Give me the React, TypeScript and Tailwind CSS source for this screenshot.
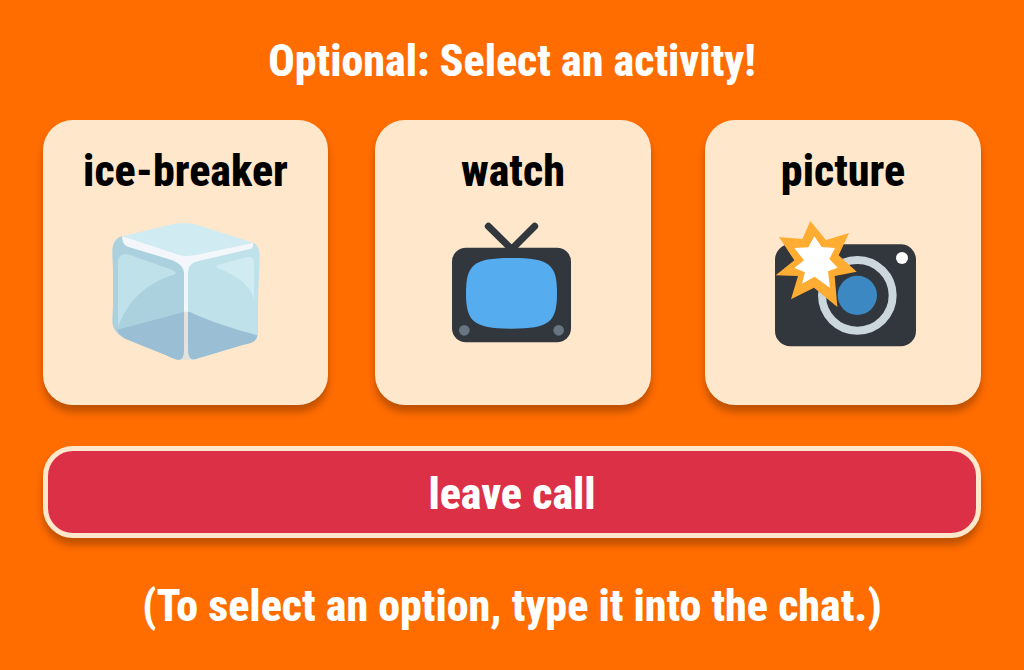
import type { ReactNode } from "react";

function IceIcon() {
  return (
    <svg viewBox="33 30 450 420" className="h-[140px] w-[150px]" aria-hidden="true">
      <path fill="#F3F7FB" d="M66 79L258 130L459 98L460 120L290 170L267 310L250 310L230 175L75 125Z" />
      <path fill="#E4E2DA" d="M249 305H267V420L277 449Q258 451 240 448L249 420Z" />
      <path fill="#D1EBF2" d="M66 79L205 46C238 37 270 37 300 47L456 97Q454 101 443 103L283 136C268 139 248 139 235 134L95 88Q78 83 66 79Z" />
      <path fill="#ABD1DF" d="M66 79C67 97 72 106 84 110L205 147C239 157 252 172 252 192V415C252 438 248 450 236 449C222 448 216 444 199 436L83 389C58 379 37 362 37 334C37 315 39 300 39 280V190C39 162 37 145 37 125C37 102 46 84 66 79Z" />
      <path fill="#BFE1E9" d="M458 98C462 106 459 115 450 117L296 153C274 158 264 168 264 192V415C264 440 269 450 282 449L434 403C457 397 474 393 474 370V290C475 220 479 172 479 138C479 116 472 103 458 98Z" />
      <path fill="#BFE1E9" d="M54 352V160C54 138 63 130 84 133L218 180Q236 189 220 195C142 219 86 266 54 352Z" />
      <path fill="#D1EBF2" d="M352 165L443 141Q462 139 462 157V267C447 221 409 197 358 177Q344 171 352 165Z" />
      <path fill="#9ABFD4" d="M52 359L252 306V415C252 438 248 450 236 449C222 448 216 444 199 436L83 389C68 383 56 373 52 359Z" />
      <path fill="#9ABFD4" d="M264 306L270 306C330 335 394 354 472 376C470 396 451 400 428 405L287 447C270 452 264 440 264 412Z" />
    </svg>
  );
}

function TelevisionIcon() {
  return (
    <svg viewBox="9 30 450 420" className="h-[140px] w-[150px]" aria-hidden="true">
      <path d="M160 49L230 118L299 49" fill="none" stroke="#31373D" strokeWidth="21" strokeLinecap="round" />
      <rect x="51" y="113" width="357" height="284" rx="42" fill="#31373D" />
      <path fill="#55ACEE" d="M366 250C366 337 343 356 230 356S93 337 93 250S116 144 230 144S366 163 366 250Z" />
      <circle cx="88" cy="361" r="16" fill="#66757F" />
      <circle cx="371" cy="361" r="16" fill="#66757F" />
    </svg>
  );
}

function CameraIcon() {
  return (
    <svg viewBox="9 30 450 420" className="h-[140px] w-[150px]" aria-hidden="true">
      <rect x="30" y="103" width="423" height="306" rx="46" fill="#31373D" />
      <circle cx="277" cy="256" r="106" fill="none" stroke="#CCD6DD" strokeWidth="24" />
      <circle cx="277" cy="256" r="59" fill="#3B88C3" />
      <circle cx="411" cy="144" r="18" fill="#FFFFFF" />
      <path fill="#FFAC33" d="M136 33L183 90L252 69L221 136L275 185L209 198L217 291L147 233L78 268L99 198L32 196L88 151L42 81L112 87Z" />
      <path fill="#FFFFFF" d="M148 79L170 111L210 114L193 147L218 173L189 184L195 234L149 200L111 221L120 187L88 174L117 151L88 114L130 112Z" />
    </svg>
  );
}

function Activity({ name, place, children }: { name: string; place: string; children: ReactNode }) {
  return (
    <button
      type="button"
      className={`${place} flex flex-col items-center rounded-[30px] bg-[#ffe7cc] pt-[23px] pb-[45px] text-black shadow-[0_7px_7px_rgba(0,0,0,0.25)]`}
    >
      <span className="mb-[21px] leading-14">{name}</span>
      {children}
    </button>
  );
}

export default function App() {
  return (
    <main className="flex min-h-screen flex-col bg-[#ff6c00] px-[43px] pt-8 pb-8 text-center font-['Roboto_Condensed','Liberation_Sans_Narrow',sans-serif] text-[44px] font-extrabold text-white">
      <h1 className="pt-px leading-14">Optional: Select an activity!</h1>
      <div className="mt-[31px] grid grid-cols-[285fr_47fr_276fr_54fr_276fr]">
        <Activity name="ice-breaker" place="col-start-1">
          <IceIcon />
        </Activity>
        <Activity name="watch" place="col-start-3">
          <TelevisionIcon />
        </Activity>
        <Activity name="picture" place="col-start-5">
          <CameraIcon />
        </Activity>
      </div>
      <button
        type="button"
        className="mt-[41px] rounded-[30px] border-5 border-[#ffe7cc] bg-[#dc3046] pt-[15px] pb-[11px] leading-14 shadow-[0_7px_7px_rgba(0,0,0,0.25)]"
      >
        leave call
      </button>
      <p className="mt-10 leading-14">(To select an option, type it into the chat.)</p>
    </main>
  );
}
